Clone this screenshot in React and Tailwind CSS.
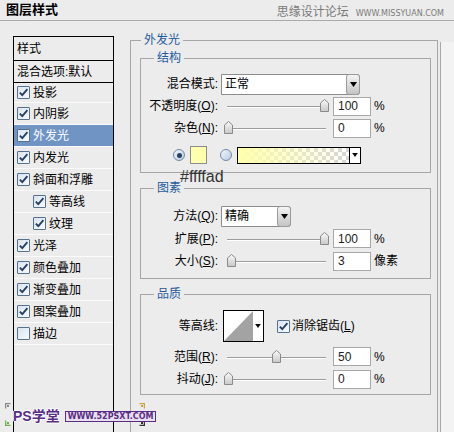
import React from 'react'

function Check({ on = true }) {
  return (
    <span className="w-[13px] h-[13px] shrink-0 border border-[#56708f] rounded-[1px] bg-gradient-to-br from-[#d9e4f1] to-[#f7faff] flex items-center justify-center">
      {on && (
        <svg width="11" height="11" viewBox="0 0 11 11">
          <path d="M1.8 5.6 L4.3 8.2 L9.4 2.2" fill="none" stroke="#233e62" strokeWidth="1.8" />
        </svg>
      )}
    </span>
  )
}

function Radio({ on }) {
  return (
    <span className="w-[12px] h-[12px] shrink-0 rounded-full border border-[#7489a2] bg-gradient-to-br from-[#f3f7fc] to-[#b7cbe2] flex items-center justify-center">
      {on && <span className="w-[5px] h-[5px] rounded-full bg-[#2b4262]" />}
    </span>
  )
}

function Arrow({ size = 7 }) {
  return (
    <svg width={size} height={size - 2} viewBox="0 0 7 5">
      <path d="M0 0 H7 L3.5 5 Z" fill="#000" />
    </svg>
  )
}

function Thumb() {
  return (
    <svg width="9" height="13" viewBox="0 0 9 13">
      <defs>
        <linearGradient id="tg" x1="0" y1="0" x2="0" y2="1">
          <stop offset="0" stopColor="#fafafa" />
          <stop offset="1" stopColor="#c8c8c8" />
        </linearGradient>
      </defs>
      <path d="M0.5 12.5 V4 L4.5 0.5 L8.5 4 V12.5 Z" fill="url(#tg)" stroke="#8a8a8a" />
    </svg>
  )
}

function Slider({ value }) {
  return (
    <div className="relative w-[105px] h-[14px] shrink-0">
      <div className="absolute left-[3px] right-[3px] top-[7px] h-px bg-[#9c9c9c] shadow-[0_1px_0_#fff]" />
      <div className="absolute top-0" style={{ left: `${value * 0.96}px` }}>
        <Thumb />
      </div>
    </div>
  )
}

function Num({ value }) {
  return (
    <div className="w-[38px] h-[19px] shrink-0 border border-[#a8a8a8] bg-white pl-[4px] flex items-center text-[12px] text-[#222]">
      {value}
    </div>
  )
}

function Select({ text, className }) {
  return (
    <div className={`h-[21px] shrink-0 border border-[#8c8c8c] bg-white rounded-r-[3px] flex items-center ${className}`}>
      <span className="flex-1 pl-[3px]">{text}</span>
      <span className="w-[14px] h-[21px] -my-px -mr-px rounded-[3px] border border-[#9a9a9a] bg-gradient-to-b from-[#f4f4f4] to-[#c4c4c4] flex items-center justify-center">
        <Arrow />
      </span>
    </div>
  )
}

function Label({ children }) {
  return <span className="w-[77px] shrink-0 text-right">{children}</span>
}

function SliderRow({ label, value, unit = '%', tall }) {
  return (
    <div className={`${tall ? 'h-[23px]' : 'h-[22px]'} flex items-center`}>
      <Label>{label}</Label>
      <div className="ml-[6px]">
        <Slider value={value} />
      </div>
      <div className="ml-[4px]">
        <Num value={value} />
      </div>
      <span className="ml-[3px]">{unit}</span>
    </div>
  )
}

function Group({ title, className, legend = 'ml-[13px]', children }) {
  return (
    <fieldset className={`border border-[#a6a6a6] ${className}`}>
      <legend className={`${legend} px-[3px] text-[12px] leading-[14px] text-[#1f5a9e]`}>{title}</legend>
      {children}
    </fieldset>
  )
}

function StyleRow({ label, on = true, indent, selected, short }) {
  return (
    <div
      className={`${short ? 'h-[20px]' : 'h-[22px]'} flex items-center border-b border-[#fbfbfb] ${indent ? 'pl-[19px]' : 'pl-[3px]'} ${selected ? 'bg-[#7094c3] text-white' : ''}`}
    >
      <Check on={on} />
      <span className="ml-[3px]">{label}</span>
    </div>
  )
}

const rows = [
  { label: '内阴影' },
  { label: '外发光', selected: true },
  { label: '内发光' },
  { label: '斜面和浮雕' },
  { label: '等高线', indent: true },
  { label: '纹理', indent: true },
  { label: '光泽' },
  { label: '颜色叠加' },
  { label: '渐变叠加' },
  { label: '图案叠加' },
  { label: '描边', on: false },
]

function Corner({ color, rotate }) {
  return (
    <svg width="6" height="6" viewBox="0 0 6 6" className={rotate}>
      <path d="M0.5 5.5 V0.5 H5.5" fill="none" stroke={color} strokeWidth="1.5" />
      <rect x="2" y="2" width="2" height="2" fill={color} />
    </svg>
  )
}

export default function App() {
  return (
    <div className="relative w-[454px] h-[432px] overflow-hidden bg-[#ececec] text-[12px] leading-[14px] text-black font-['Liberation_Sans','Noto_Sans_CJK_SC',sans-serif] flex flex-col">
      <div className="h-[21px] shrink-0 border-b border-[#aaaaaa] flex items-center justify-between pl-[6px] pr-[10px]">
        <span className="text-[13px] font-bold leading-[16px]">图层样式</span>
        <span className="flex items-end pt-[3px] text-[#7a7a7a]">
          <span className="text-[12px] leading-[14px]">思缘设计论坛</span>
          <span className="ml-[7px] text-[8px] leading-[10px] font-['DejaVu_Sans',sans-serif]">WWW.MISSYUAN.COM</span>
        </span>
      </div>

      <div className="flex flex-1 items-start">
        <div className="ml-[13px] mt-[15px] w-[101px] h-[420px] shrink-0 border border-b-0 border-black">
          <div className="h-[24px] border-b border-black pl-[3px] flex items-center">样式</div>
          <div className="h-[22px] border-b border-black pl-[3px] flex items-center">混合选项:默认</div>
          <StyleRow label="投影" short />
          {rows.map((r) => (
            <StyleRow key={r.label} {...r} />
          ))}
        </div>

        <Group title="外发光" legend="ml-[1px]" className="ml-[16px] mt-[12px] w-[308px] h-[420px] shrink-0 pl-[9px] pr-[6px]">
          <Group title="结构" className="mt-[4px] pt-[8px] pb-[6px]">
            <div className="h-[22px] flex items-center">
              <Label>混合模式:</Label>
              <Select text="正常" className="ml-[3px] w-[139px]" />
            </div>
            <SliderRow label={<>不透明度(<u>O</u>):</>} value={100} />
            <SliderRow label={<>杂色(<u>N</u>):</>} value={0} />
            <div className="mt-[5px] h-[22px] flex items-center pl-[32px]">
              <Radio on />
              <span className="ml-[5px] w-[17px] h-[18px] border border-[#8d8d8d] bg-[#ffffad]" />
              <span className="ml-[13px]">
                <Radio />
              </span>
              <div className="ml-[5px] w-[124px] h-[17px] border border-black flex">
                <div className="flex-1 bg-[conic-gradient(#d6d6d6_25%,#ffffff_0_50%,#d6d6d6_0_75%,#ffffff_0)] bg-[length:8px_8px]">
                  <div className="w-full h-full bg-gradient-to-r from-[#ffffad] to-transparent" />
                </div>
                <div className="w-[11px] border-l border-black bg-white flex items-center justify-center">
                  <Arrow size={6} />
                </div>
              </div>
            </div>
          </Group>

          <Group title="图素" className="mt-[8px] pt-[10px] pb-[6px]">
            <div className="h-[22px] flex items-center">
              <Label>方法(<u>Q</u>):</Label>
              <Select text="精确" className="ml-[3px] w-[70px]" />
            </div>
            <SliderRow label={<>扩展(<u>P</u>):</>} value={100} tall />
            <SliderRow label={<>大小(<u>S</u>):</>} value={3} unit="像素" />
          </Group>

          <Group title="品质" className="mt-[8px] pt-[9px] pb-[4px]">
            <div className="h-[32px] flex items-center">
              <Label>等高线:</Label>
              <div className="ml-[5px] w-[41px] h-[32px] border border-black bg-white flex">
                <svg width="29" height="30" viewBox="0 0 29 30" className="shrink-0">
                  <path d="M0 30 L29 0 V30 Z" fill="#a3a3a3" />
                </svg>
                <div className="flex-1 flex items-center justify-center">
                  <Arrow size={6} />
                </div>
              </div>
              <span className="ml-[13px]">
                <Check />
              </span>
              <span className="ml-[2px]">消除锯齿(<u>L</u>)</span>
            </div>
            <div className="mt-[3px]">
              <SliderRow label={<>范围(<u>R</u>):</>} value={50} tall />
              <SliderRow label={<>抖动(<u>J</u>):</>} value={0} />
            </div>
          </Group>
        </Group>

        <div className="ml-[2px] mt-[21px] h-[420px] flex-1 border-l border-[#a8a8a8] bg-[#f3f3f3]" />
      </div>

      <div className="absolute left-[180px] top-[169px] text-[16px] leading-[16px] text-[#333] font-['Liberation_Sans',sans-serif]">
        #ffffad
      </div>

      <div className="absolute left-[5px] top-[403px] flex flex-col gap-[11px]">
        <Corner color="#8a8a8a" />
        <Corner color="#6fae4e" rotate="-rotate-90" />
      </div>
      <div className="absolute left-[139px] top-[403px] flex flex-col gap-[11px]">
        <Corner color="#c9a640" rotate="rotate-90" />
        <Corner color="#333" rotate="rotate-180" />
      </div>
      <div className="absolute left-[13px] top-[408px] flex items-center gap-[5px]">
        <span className="text-[14px] leading-[16px] font-bold text-[#5a2e86] [text-shadow:-1px_0_#fff,1px_0_#fff,0_-1px_#fff,0_1px_#fff]">
          PS学堂
        </span>
        <span className="px-[2px] h-[11px] flex items-center border border-[#5a2e86] bg-[#e8e0f0] text-[8px] leading-[9px] font-bold text-[#5a2e86] font-['DejaVu_Sans',sans-serif]">
          WWW.52PSXT.COM
        </span>
      </div>
    </div>
  )
}
